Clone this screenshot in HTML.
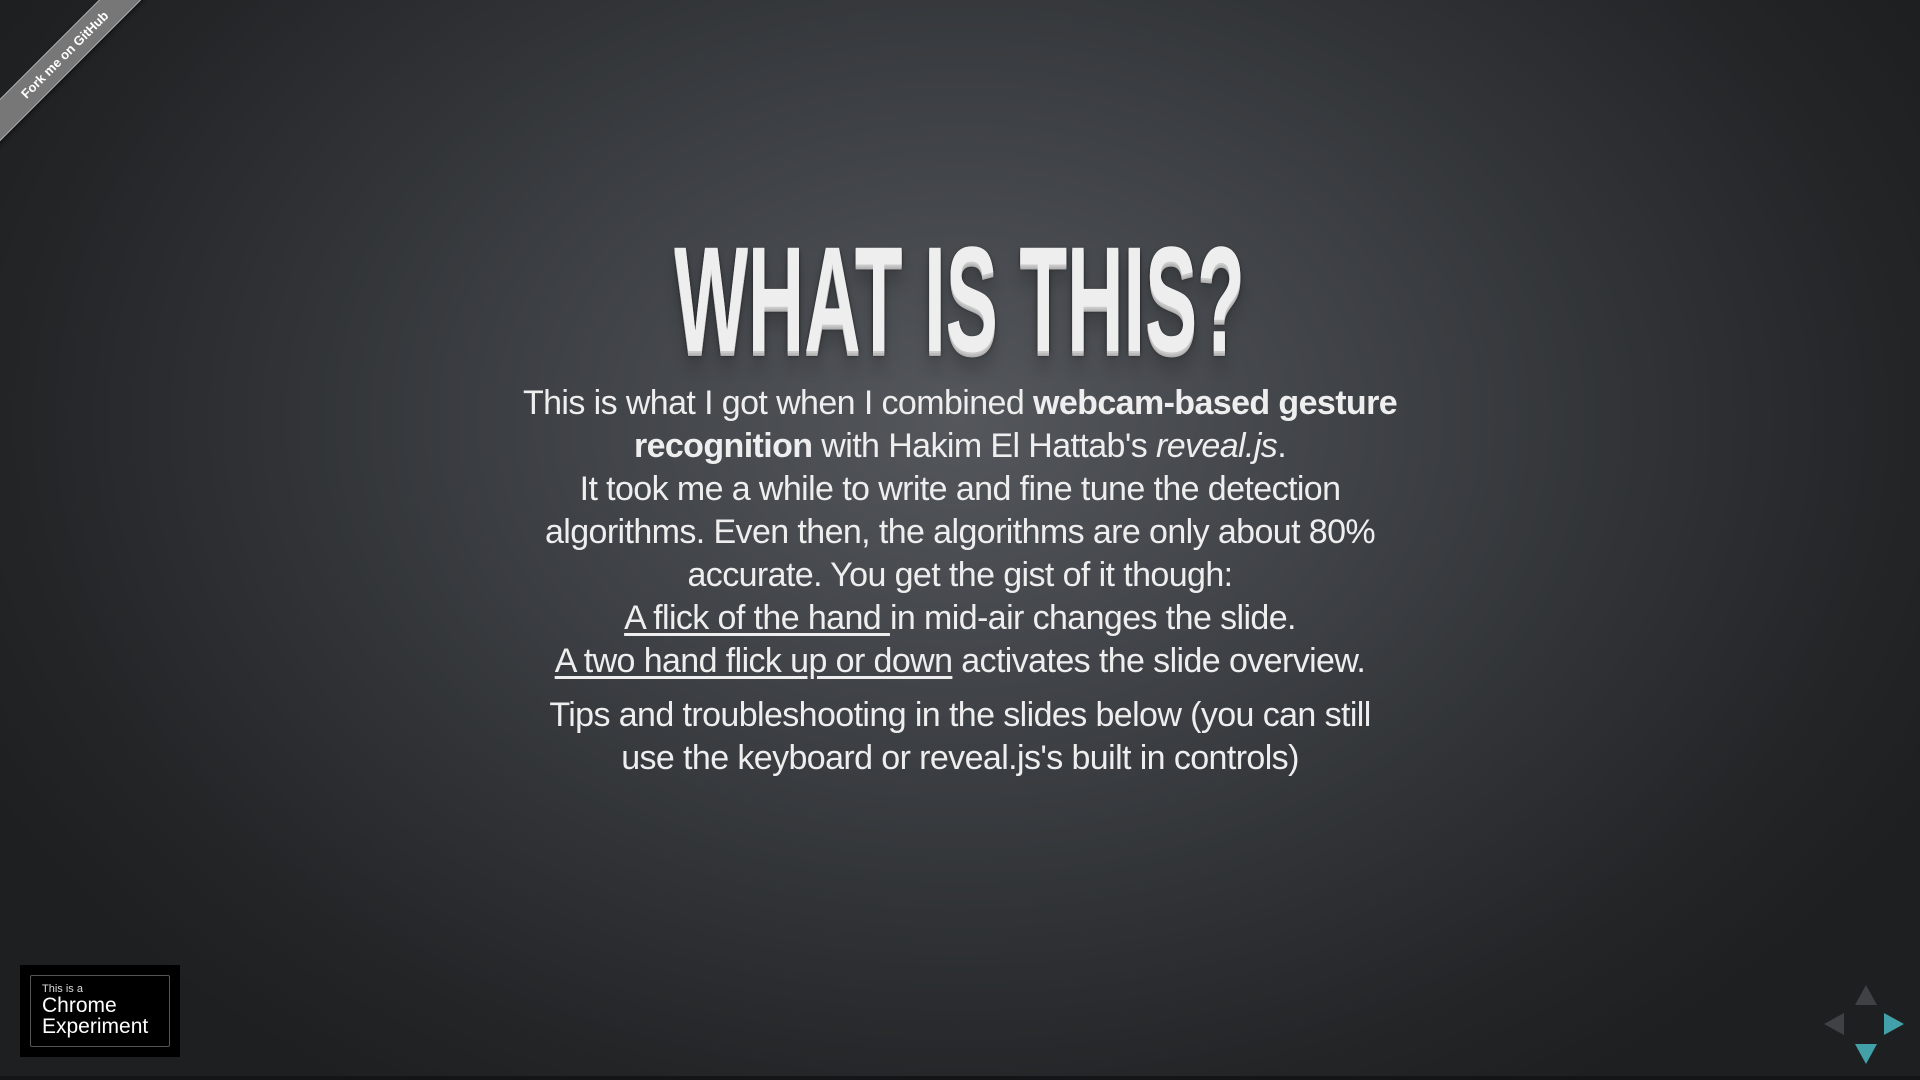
<!DOCTYPE html>
<html><head><meta charset="utf-8"><style>
html,body{margin:0;padding:0;width:1920px;height:1080px;overflow:hidden}
body{background:radial-gradient(ellipse 1100px 800px at 960px 420px,#54575c 0%,#3a3d41 45%,#232527 85%,#1e1f21 100%);font-family:"Liberation Sans",sans-serif;color:#eee;position:relative}
.title{position:absolute;left:0;width:1920px;top:224px;text-align:center;height:150px}
.title span{display:inline-block;font-weight:bold;font-size:150px;line-height:150px;color:#eee;transform:scaleX(0.52);transform-origin:center;white-space:nowrap;
text-shadow:0 1px 0 #ccc,0 2px 0 #c9c9c9,0 3px 0 #bbb,0 4px 0 #b9b9b9,0 5px 0 #aaa,0 6px 1px rgba(0,0,0,.1),0 0 5px rgba(0,0,0,.1),0 1px 3px rgba(0,0,0,.3),0 3px 5px rgba(0,0,0,.2),0 5px 10px rgba(0,0,0,.25),0 20px 20px rgba(0,0,0,.15)}
.l{position:absolute;left:0;width:1920px;text-align:center;font-size:34px;letter-spacing:-0.6px;white-space:nowrap;line-height:43px}
u{text-decoration:underline;text-underline-offset:4px}
.rib{position:absolute;left-55px;left:-55px;top:40px;width:240px;height:28px;background:#777;transform:rotate(-45deg);border-top:1px solid #aaa;border-bottom:1px solid #aaa;box-shadow:0 2px 4px rgba(0,0,0,.5);color:#fff;font-size:13px;font-weight:bold;text-align:center;line-height:28px}
.badge{position:absolute;left:20px;top:965px;width:160px;height:92px;background:#000}
.badge .in{position:absolute;left:10px;top:10px;right:10px;bottom:10px;border:1px solid #555;border-radius:2px}
.badge .a{position:absolute;left:22px;top:18px;font-size:11px;color:#ddd}
.badge .b{position:absolute;left:22px;top:30px;font-size:21px;line-height:21px;color:#fff}
.tri{position:absolute;width:0;height:0}
</style></head><body>
<div class="rib">Fork me on GitHub</div>
<div class="title"><span>WHAT IS THIS?</span></div>
<div class="l" style="top:382px">This is what I got when I combined <b>webcam-based gesture</b></div>
<div class="l" style="top:425px"><b>recognition</b> with Hakim El Hattab's <i>reveal.js</i>.</div>
<div class="l" style="top:468px">It took me a while to write and fine tune the detection</div>
<div class="l" style="top:511px">algorithms. Even then, the algorithms are only about 80%</div>
<div class="l" style="top:554px">accurate. You get the gist of it though:</div>
<div class="l" style="top:597px"><u>A flick of the hand </u>in mid-air changes the slide.</div>
<div class="l" style="top:640px"><u>A two hand flick up or down</u> activates the slide overview.</div>
<div class="l" style="top:694px">Tips and troubleshooting in the slides below (you can still</div>
<div class="l" style="top:737px">use the keyboard or reveal.js's built in controls)</div>
<div class="badge"><div class="in"></div><div class="a">This is a</div><div class="b">Chrome<br>Experiment</div></div>
<div class="tri" style="left:1855px;top:985px;border-left:11px solid transparent;border-right:11px solid transparent;border-bottom:20px solid #3f4145"></div>
<div class="tri" style="left:1824px;top:1013px;border-top:11px solid transparent;border-bottom:11px solid transparent;border-right:20px solid #3f4145"></div>
<div class="tri" style="left:1884px;top:1013px;border-top:11px solid transparent;border-bottom:11px solid transparent;border-left:20px solid #42a0a8"></div>
<div class="tri" style="left:1855px;top:1044px;border-left:11px solid transparent;border-right:11px solid transparent;border-top:20px solid #42a0a8"></div>
<div style="position:absolute;left:0;top:1076px;width:1920px;height:4px;background:#141516"></div>
</body></html>
